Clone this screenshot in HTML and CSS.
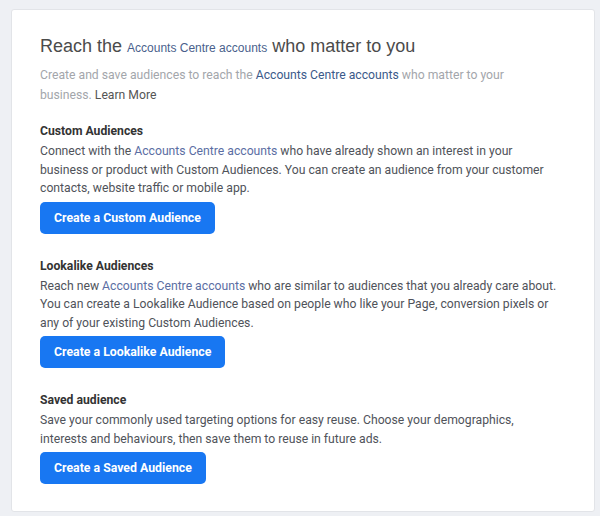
FILE: index.html
```html
<!DOCTYPE html>
<html lang="en">
<head>
    <meta charset="UTF-8">
    <title>Audiences</title>
    <link rel="stylesheet" href="styles.css">
</head>
<body>
<div class="card">
    <h2 class="title">Reach the <a class="small-link">Accounts Centre accounts</a> who matter to you</h2>
    <p class="intro">Create and save audiences to reach the <a class="link-dark">Accounts Centre accounts</a> who matter to your business. <a class="learn">Learn More</a></p>

    <div class="section">
        <h3>Custom Audiences</h3>
        <p>Connect with the <a class="link">Accounts Centre accounts</a> who have already shown an interest in your business or product with Custom Audiences. You can create an audience from your customer contacts, website traffic or mobile app.</p>
        <button>Create a Custom Audience</button>
    </div>

    <div class="section">
        <h3>Lookalike Audiences</h3>
        <p>Reach new <a class="link">Accounts Centre accounts</a> who are similar to audiences that you already care about. You can create a Lookalike Audience based on people who like your Page, conversion pixels or any of your existing Custom Audiences.</p>
        <button>Create a Lookalike Audience</button>
    </div>

    <div class="section">
        <h3>Saved audience</h3>
        <p>Save your commonly used targeting options for easy reuse. Choose your demographics, interests and behaviours, then save them to reuse in future ads.</p>
        <button>Create a Saved Audience</button>
    </div>
</div>
</body>
</html>
```

FILE: styles.css
```css
body {
    margin: 0;
    padding: 9px 5px 0 11px;
    background: #eef0f4;
    font-family: Roboto, "Liberation Sans", sans-serif;
}
.card {
    background: white;
    border: 1px solid #e2e4e8;
    border-radius: 3px;
    padding: 24px 28px 22px 28px;
    height: 455px;
}
.title {
    margin: 0;
    font-family: "Liberation Sans", Arial, sans-serif;
    font-size: 18px;
    font-weight: normal;
    color: #4b4b4b;
    line-height: 24px;
}
.small-link {
    font-size: 12px;
    color: #4a5f8c;
}
.intro {
    margin: 5px 0 0;
    font-size: 12.2px;
    line-height: 20px;
    color: #a3a6ab;
    width: 480px;
}
.link-dark {
    color: #3b5a8a;
}
.learn {
    color: #555;
}
.section {
    margin-top: 18px;
}
.section + .section {
    margin-top: 24px;
}
.section h3 {
    margin: 0;
    font-size: 12.2px;
    font-weight: bold;
    color: #333;
    line-height: 17px;
}
.section p {
    margin: 2px 0 0;
    font-size: 12.2px;
    line-height: 18.5px;
    color: #50535a;
    width: 520px;
}
.link {
    color: #5b6ea3;
}
button {
    margin-top: 4px;
    height: 32px;
    padding: 0 14px;
    background: #1877f2;
    color: white;
    border: none;
    border-radius: 5px;
    font-family: Roboto, "Liberation Sans", sans-serif;
    font-size: 12.3px;
    font-weight: bold;
}
```
